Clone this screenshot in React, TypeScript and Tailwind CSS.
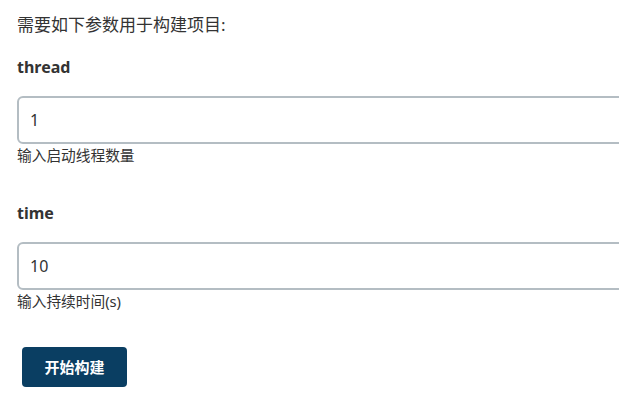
import React from 'react';

const fontStack = { fontFamily: '"Noto Sans", "Noto Sans CJK SC", sans-serif' };

interface ParamFieldProps {
  name: string;
  value: string;
  hint: string;
  className?: string;
}

const ParamField: React.FC<ParamFieldProps> = ({ name, value, hint, className = '' }) => (
  <div className={`flex flex-col ${className}`}>
    <label className="text-[16px] leading-[24px] font-bold text-[#333]">{name}</label>
    <input
      type="text"
      defaultValue={value}
      className="mt-[17px] h-[48px] w-[700px] rounded-[6px] border-2 border-[#b4bdc3] bg-white px-[11px] text-[16px] text-[#333] outline-none"
      style={fontStack}
    />
    <p className="mt-[1px] text-[14.7px] leading-[21px] text-[#333]">{hint}</p>
  </div>
);

export default function App() {
  return (
    <div
      className="w-[619px] h-[401px] overflow-hidden bg-white pl-[17px] pt-[11px]"
      style={fontStack}
    >
      <p className="text-[17px] leading-[28px] text-[#333]">需要如下参数用于构建项目:</p>

      <ParamField name="thread" value="1" hint="输入启动线程数量" className="mt-[16px]" />
      <ParamField name="time" value="10" hint="输入持续时间(s)" className="mt-[35px]" />

      <button className="ml-[5px] mt-[35px] h-[40px] w-[105px] rounded-[4px] bg-[#0a3e62] text-[15px] font-bold text-white">
        开始构建
      </button>
    </div>
  );
}
